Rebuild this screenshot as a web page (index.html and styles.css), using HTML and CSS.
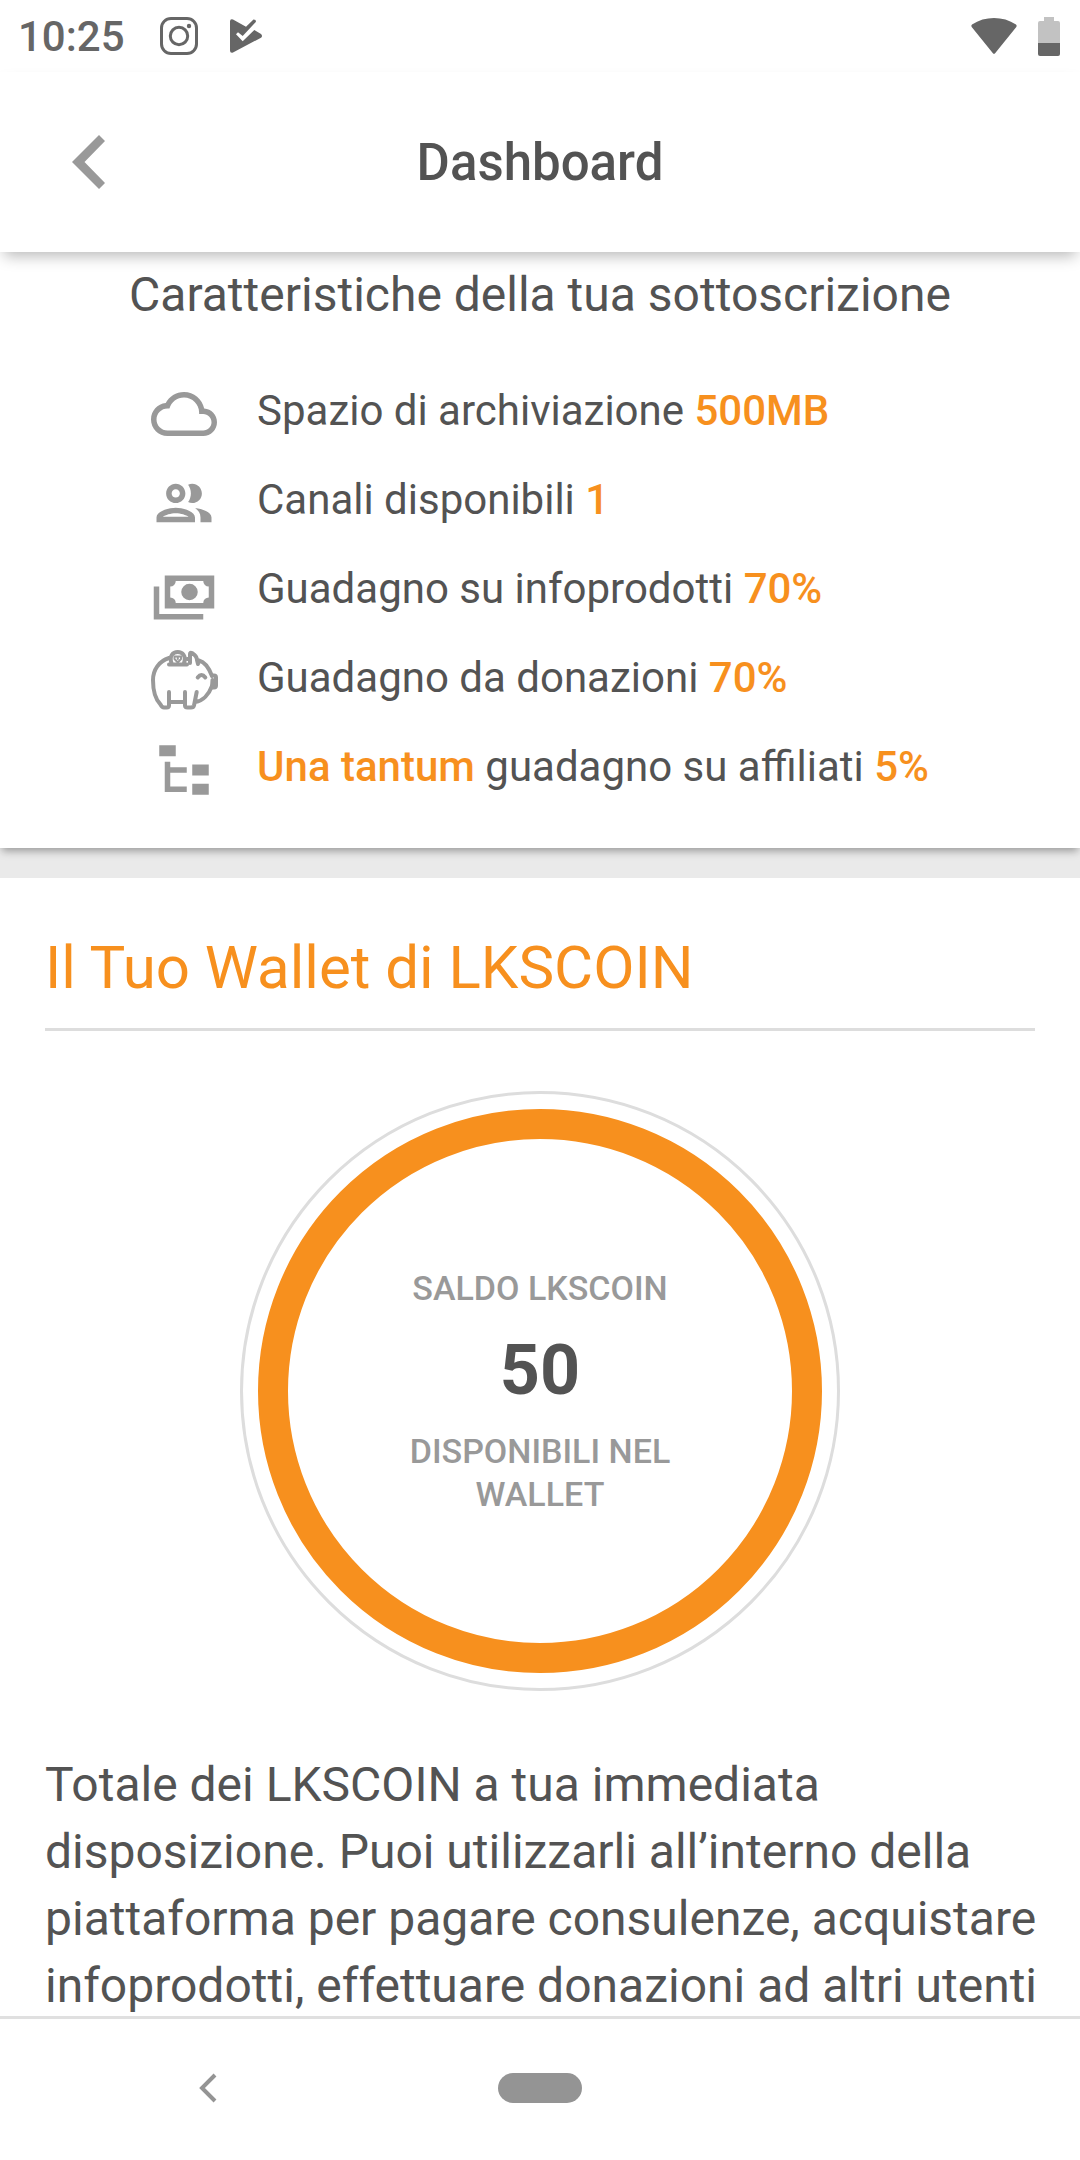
FILE: index.html
```html
<!DOCTYPE html>
<html lang="it">
<head>
<meta charset="utf-8">
<meta name="viewport" content="width=device-width, initial-scale=1">
<title>Dashboard</title>
<link rel="stylesheet" href="styles.css">
</head>
<body>
<div class="app">
  <div class="status">
    <span class="status-time">10:25</span>
    <svg class="status-insta" viewBox="0 0 38 38" aria-hidden="true">
      <rect x="1.5" y="1.5" width="35" height="35" rx="9.5"/>
      <circle cx="19" cy="19" r="8.7"/>
      <circle class="solid" cx="29" cy="9" r="2.2"/>
    </svg>
    <svg class="status-play" viewBox="0 0 32 34" aria-hidden="true">
      <path d="M0 2.500Q0-.5 3 .5L16 7.800 23.500.6Q26 .5 26 2.800L12.700 17 8 13.300 6 15.200 12.700 22.300 24.300 11 31 15Q33 17 31 18.700L3 33.500Q0 34.300 0 31.500Z"/>
    </svg>
    <span class="status-space"></span>
    <svg class="status-wifi" viewBox="0 0 46 36" aria-hidden="true">
      <path d="M1 6.500C14-2.100 32-2.100 45 6.500Q46.300 7.500 45.300 9L24.300 35Q23 36.700 21.700 35L.7 9Q-.3 7.500 1 6.500Z"/>
    </svg>
    <svg class="status-battery" viewBox="0 0 22 39" aria-hidden="true">
      <path class="empty" d="M6 0H16V4H20Q22 4 22 6V26H0V6Q0 4 2 4H6Z"/>
      <path d="M0 26H22V37Q22 39 20 39H2Q0 39 0 37Z"/>
    </svg>
  </div>

  <header class="header">
    <button class="header-back" type="button" aria-label="Indietro">
      <svg viewBox="0 0 33 54" aria-hidden="true"><path d="M27 0 33 6 12.500 27 33 48 27 54 0 27Z"/></svg>
    </button>
    <h1 class="header-title">Dashboard</h1>
  </header>

  <main class="content">
    <section class="plan">
      <h2 class="plan-title">Caratteristiche della tua sottoscrizione</h2>
      <ul class="features">
        <li class="feature">
          <svg class="feature-icon" viewBox="0 0 24 24" aria-hidden="true"><path d="M19.350 10.040C18.670 6.590 15.640 4 12 4 9.110 4 6.600 5.640 5.350 8.040 2.340 8.360 0 10.910 0 14c0 3.310 2.690 6 6 6h13c2.760 0 5-2.240 5-5 0-2.640-2.050-4.780-4.650-4.960zM19 18H6c-2.210 0-4-1.790-4-4s1.790-4 4-4h.71C7.370 7.690 9.480 6 12 6c3.040 0 5.500 2.460 5.500 5.500v.5H19c1.660 0 3 1.340 3 3s-1.340 3-3 3z"/></svg>
          <span>Spazio di archiviazione <strong>500MB</strong></span>
        </li>
        <li class="feature">
          <svg class="feature-icon" viewBox="0 0 24 24" aria-hidden="true"><path d="M9 13.750c-2.340 0-7 1.170-7 3.500V19h14v-1.750c0-2.330-4.660-3.500-7-3.500zM4.340 17c.84-.58 2.870-1.250 4.660-1.250s3.820.67 4.660 1.250H4.340zM9 12c1.930 0 3.500-1.570 3.500-3.500S10.930 5 9 5 5.500 6.570 5.500 8.500 7.070 12 9 12zm0-5c.83 0 1.500.67 1.500 1.500S9.830 10 9 10s-1.500-.67-1.500-1.500S8.170 7 9 7zm7.040 6.810c1.160.84 1.960 1.960 1.960 3.440V19h4v-1.750c0-2.020-3.500-3.170-5.960-3.440zM15 12c1.930 0 3.500-1.570 3.500-3.500S16.930 5 15 5c-.54 0-1.040.13-1.500.35.63.89 1 1.980 1 3.150s-.37 2.260-1 3.150c.46.22.96.35 1.500.35z"/></svg>
          <span>Canali disponibili <strong>1</strong></span>
        </li>
        <li class="feature">
          <svg class="feature-icon" viewBox="0 0 24 24" aria-hidden="true"><path d="M5,6H23V18H5V6M14,9A3,3 0 0,1 17,12A3,3 0 0,1 14,15A3,3 0 0,1 11,12A3,3 0 0,1 14,9M9,8A2,2 0 0,1 7,10V14A2,2 0 0,1 9,16H19A2,2 0 0,1 21,14V10A2,2 0 0,1 19,8H9M1,10H3V20H19V22H1V10Z"/></svg>
          <span>Guadagno su infoprodotti <strong>70%</strong></span>
        </li>
        <li class="feature">
          <svg class="feature-icon feature-icon-line" viewBox="0 0 66 66" aria-hidden="true">
            <path d="M18 10C8 13 2 22 2 32C2 44 5 52 9.500 56.500Q11 59.500 13 59.500H15.500Q18 59.500 18 57.500V44M18 54H34M34 44V57.500Q34 59.500 36.500 59.500H40Q42.500 59.500 43 57.500L45.700 44M44.500 54C52 53 58 46 61 38M61 28C58 20 54 14 48 12.500M36 11H39M39 15V6Q39 4 41 5Q46 8 46 12L47 16"/>
            <path d="M61 27.500H63Q65 27.500 65 29.500V37.500Q65 39.500 63 39.500H61L61.500 32M46.700 29.500Q50.500 24.500 54.300 29.500"/>
            <path d="M18 16.500H36M20.500 15C18 8 22 4 26.700 4C31.500 4 35.500 8 33 15"/>
            <path class="thin" d="M23.500 8.500H30V11L26.800 14.500 23.500 11ZM26.800 9V11"/>
          </svg>
          <span>Guadagno da donazioni <strong>70%</strong></span>
        </li>
        <li class="feature">
          <svg class="feature-icon" viewBox="0 0 24 24" aria-hidden="true"><path d="M3,3H9V7H3V3M15,10H21V14H15V10M15,17H21V21H15V17M13,13H7V18H13V20H5V9H7V11H13V13Z"/></svg>
          <span><strong>Una tantum</strong> guadagno su affiliati <strong>5%</strong></span>
        </li>
      </ul>
    </section>

    <section class="wallet">
      <h2 class="wallet-title">Il Tuo Wallet di LKSCOIN</h2>
      <div class="ring">
        <div class="ring-inner">
          <span class="ring-label">SALDO LKSCOIN</span>
          <strong class="ring-value">50</strong>
          <span class="ring-label">DISPONIBILI NEL<br>WALLET</span>
        </div>
      </div>
      <p class="wallet-text">Totale dei LKSCOIN a tua immediata disposizione. Puoi utilizzarli all’interno della piattaforma per pagare consulenze, acquistare infoprodotti, effettuare donazioni ad altri utenti</p>
    </section>
  </main>

  <nav class="navbar" aria-label="Sistema">
    <button class="nav-back" type="button" aria-label="Indietro">
      <svg viewBox="0 0 18 30" aria-hidden="true"><path d="M16 2 3 15 16 28"/></svg>
    </button>
    <button class="nav-home" type="button" aria-label="Home"></button>
  </nav>
</div>
</body>
</html>
```
FILE: styles.css
```css
* {
  box-sizing: border-box;
}

body {
  margin: 0;
  background: #fff;
  color: #535353;
  font-family: Roboto, "Liberation Sans", sans-serif;
}

h1, h2, p, ul {
  margin: 0;
  padding: 0;
}

button {
  padding: 0;
  border: 0;
  background: none;
}

svg {
  display: block;
  flex: none;
  overflow: visible;
}

.app {
  display: flex;
  flex-direction: column;
  height: 100vh;
}

/* Status bar */
.status {
  display: flex;
  flex: none;
  align-items: center;
  height: 72px;
  padding: 0 20px 0 18px;
  background: #fff;
  color: #666;
  fill: #666;
}

.status-time {
  font-size: 42px;
  font-weight: 500;
  line-height: 50px;
  padding-top: 2px;
}

.status-insta {
  width: 38px;
  height: 38px;
  margin-left: 35px;
  fill: none;
  stroke: #666;
  stroke-width: 3;
}

.status-insta .solid {
  fill: #666;
  stroke: none;
}

.status-play {
  width: 32px;
  height: 34px;
  margin-left: 32px;
}

.status-space {
  flex: 1;
}

.status-wifi {
  width: 46px;
  height: 36px;
  margin-right: 21px;
}

.status-battery {
  width: 22px;
  height: 39px;
}

.status-battery .empty {
  fill: #c2c2c2;
}

/* App header */
.header {
  position: relative;
  z-index: 1;
  display: grid;
  flex: none;
  grid-template-columns: 1fr auto 1fr;
  align-items: center;
  height: 180px;
  padding: 0 72px;
  background: #fff;
  box-shadow: 0 8px 14px -4px rgba(0, 0, 0, 0.28);
}

.header-back {
  justify-self: start;
}

.header-back svg {
  width: 33px;
  height: 54px;
  fill: #999;
}

.header-title {
  font-size: 51px;
  font-weight: 500;
}

/* Scrolling content */
.content {
  flex: 1;
  min-height: 0;
  overflow: hidden;
  background: #eaeaea;
}

.plan {
  padding: 10px 0 38px;
  background: #fff;
  box-shadow: 0 5px 8px -2px rgba(0, 0, 0, 0.35);
}

.plan-title {
  font-size: 48px;
  font-weight: 400;
  line-height: 66px;
  text-align: center;
}

.features {
  width: fit-content;
  margin: 37px auto 0;
  list-style: none;
}

.feature {
  display: flex;
  gap: 40px;
  height: 89px;
  font-size: 42px;
  line-height: 92px;
}

.feature-icon {
  width: 66px;
  height: 66px;
  margin-top: 16px;
  fill: #999;
}

.feature-icon-line {
  fill: none;
  stroke: #999;
  stroke-width: 4;
  stroke-linecap: round;
  stroke-linejoin: round;
}

.feature-icon-line .thin {
  stroke-width: 2;
}

.feature strong {
  color: #f7901e;
  font-weight: 500;
}

.wallet {
  margin-top: 30px;
  padding: 54px 45px 0;
  background: #fff;
}

.wallet-title {
  padding-bottom: 24px;
  border-bottom: 3px solid #ddd;
  color: #f7901e;
  font-size: 60px;
  font-weight: 400;
  line-height: 72px;
}

.ring {
  width: 600px;
  height: 600px;
  margin: 60px auto 0;
  padding: 15px;
  border: 3px solid #ddd;
  border-radius: 50%;
}

.ring-inner {
  display: flex;
  flex-direction: column;
  align-items: center;
  justify-content: center;
  gap: 16px;
  height: 100%;
  border: 30px solid #f7901e;
  border-radius: 50%;
  text-align: center;
}

.ring-label {
  color: #999;
  font-size: 34px;
  font-weight: 500;
  line-height: 43px;
}

.ring-value {
  font-size: 70px;
  font-weight: 700;
  line-height: 88px;
}

.wallet-text {
  margin: 60px -10px 0 0;
  font-size: 48px;
  line-height: 67px;
}

/* System navigation */
.navbar {
  display: grid;
  flex: none;
  grid-template-columns: 1fr auto 1fr;
  align-items: center;
  height: 144px;
  padding-bottom: 4px;
  border-top: 3px solid #e0e0e0;
  background: #fff;
}

.nav-back {
  justify-self: start;
  margin-left: 40%;
}

.nav-back svg {
  width: 18px;
  height: 30px;
  fill: none;
  stroke: #949494;
  stroke-width: 4;
}

.nav-home {
  width: 84px;
  height: 30px;
  border-radius: 15px;
  background: #949494;
}
```
